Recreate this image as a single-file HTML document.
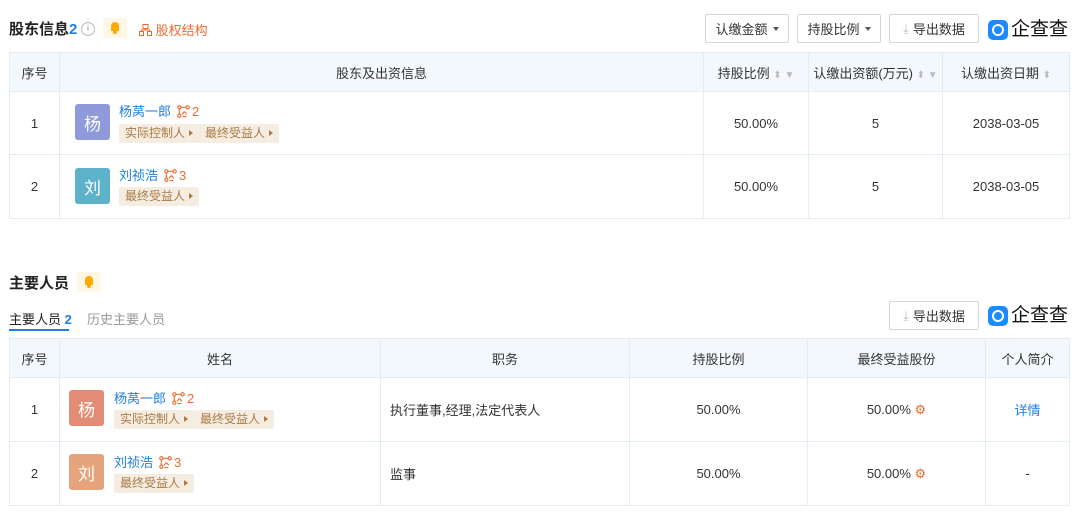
<!DOCTYPE html>
<html><head><meta charset="utf-8"><style>
*{box-sizing:border-box;margin:0;padding:0}
body{width:1080px;height:525px;background:#fff;font-family:"Liberation Sans","Noto Sans CJK SC",sans-serif;font-size:13px;color:#333;position:relative;overflow:hidden}
.abs{position:absolute}
.title{font-size:15px;font-weight:bold;color:#222;line-height:20px}
.btn{position:absolute;height:29px;border:1px solid #d6d6d6;border-radius:2px;font-size:13px;color:#333;display:flex;align-items:center;justify-content:center;background:#fff}
.caret{display:inline-block;border-left:3.5px solid transparent;border-right:3.5px solid transparent;border-top:4px solid #555;margin-left:5px}
table{position:absolute;border-collapse:collapse;left:9px;width:1060px;table-layout:fixed}
td,th{border:1px solid #e4ecf3;text-align:center;font-weight:normal;font-size:13px}
th{background:#f2f8fc;height:39px;color:#333}
.av{position:absolute;width:35px;height:36px;border-radius:3px;color:#fff;font-size:17px;display:flex;align-items:center;justify-content:center}
.nm{position:absolute;color:#1f7fe0;font-size:13px;white-space:nowrap;line-height:16px}
.nm b{color:#f06a2d;font-weight:normal;margin-left:6px}
.nm svg{vertical-align:-2px;margin-right:2px}
.tag{position:absolute;height:19px;background:#f6ede2;color:#a97a44;font-size:12px;padding:0 6px;line-height:19px;border-radius:2px;white-space:nowrap}
.tag:after{content:"";display:inline-block;border-top:3.5px solid transparent;border-bottom:3.5px solid transparent;border-left:4px solid #a97a44;margin-left:4px;vertical-align:1px}
.bell{position:absolute;width:24px;height:20px;background:#fff6e6;border-radius:2px}
.bell:before{content:"";position:absolute;left:8px;top:4px;width:8px;height:9px;background:#ffaa00;border-radius:4px 4px 1px 1px}
.bell:after{content:"";position:absolute;left:10px;top:13px;width:4px;height:3px;background:#ffaa00;border-radius:0 0 2px 2px}
.logo{position:absolute;display:flex;align-items:center;font-size:19px;color:#111;line-height:22px}
.logo i{display:inline-block;width:20px;height:20px;background:#1a8cff;border-radius:5px;margin-right:3px;position:relative}
.logo i:before{content:"";position:absolute;left:4px;top:4px;width:8px;height:8px;border:2px solid #fff;border-radius:50%}
.ic{color:#bbb;font-size:10px}
</style></head><body>
<div class="abs title" style="left:9px;top:20px">股东信息<span style="color:#1f7fe0">2</span></div>
<div class="abs" style="left:81px;top:22px;width:14px;height:14px;border:1px solid #bbb;border-radius:50%;font-size:10px;color:#aaa;text-align:center;line-height:12px">i</div>
<div class="bell" style="left:103px;top:18px"></div>
<div class="abs" style="left:139px;top:20px;color:#f06a2d;font-size:13px">
<svg width="13" height="12" style="vertical-align:-1px"><rect x="4" y="0.5" width="5" height="4" fill="none" stroke="#f06a2d"/><rect x="0.5" y="7.5" width="4" height="4" fill="none" stroke="#f06a2d"/><rect x="8.5" y="7.5" width="4" height="4" fill="none" stroke="#f06a2d"/><path d="M6.5 4.5V6M2.5 7.5V6H10.5V7.5" fill="none" stroke="#f06a2d"/></svg> 股权结构</div>
<div class="btn" style="left:705px;top:14px;width:84px">认缴金额<span class="caret"></span></div>
<div class="btn" style="left:797px;top:14px;width:84px">持股比例<span class="caret"></span></div>
<div class="btn" style="left:889px;top:14px;width:90px"><span style="color:#bbb;margin-right:4px">⤓</span>导出数据</div>
<div class="logo" style="left:988px;top:19px"><i></i>企查查</div>

<table style="top:52px">
<colgroup><col style="width:50px"><col style="width:644px"><col style="width:105px"><col style="width:134px"><col style="width:127px"></colgroup>
<tr><th>序号</th><th>股东及出资信息</th><th>持股比例 <span class="ic">⬍ ▼</span></th><th>认缴出资额(万元) <span class="ic">⬍ ▼</span></th><th>认缴出资日期 <span class="ic">⬍</span></th></tr>
<tr style="height:63px"><td>1</td><td></td><td>50.00%</td><td>5</td><td>2038-03-05</td></tr>
<tr style="height:64px"><td>2</td><td></td><td>50.00%</td><td>5</td><td>2038-03-05</td></tr>
</table>
<svg width="0" height="0" style="position:absolute"><defs><symbol id="ch" viewBox="0 0 14 14"><g fill="none" stroke="#f06a2d" stroke-width="1.2"><circle cx="2.5" cy="2.5" r="1.7"/><circle cx="11.5" cy="2.5" r="1.7"/><circle cx="2.5" cy="11.5" r="1.7"/><path d="M4.2 2.5H9.8M2.5 4.2V9.8M8 7l-2.5 3M8 7l2.5 3M6 12.5h4"/></g></symbol></defs></svg>
<div class="av" style="left:75px;top:104px;background:#8e9ad9">杨</div>
<div class="nm" style="left:119px;top:104px">杨莴一郎<b><svg width="13" height="13"><use href="#ch"/></svg>2</b></div>
<div class="tag" style="left:119px;top:124px">实际控制人</div>
<div class="tag" style="left:199px;top:124px">最终受益人</div>
<div class="av" style="left:75px;top:168px;background:#5db1c9">刘</div>
<div class="nm" style="left:119px;top:168px">刘祯浩<b><svg width="13" height="13"><use href="#ch"/></svg>3</b></div>
<div class="tag" style="left:119px;top:187px">最终受益人</div>

<div class="abs title" style="left:9px;top:274px">主要人员</div>
<div class="bell" style="left:77px;top:272px"></div>
<div class="abs" style="left:9px;top:309px;font-size:13px;color:#222">主要人员 <span style="color:#1f7fe0;font-weight:bold">2</span></div>
<div class="abs" style="left:9px;top:329px;width:60px;height:2px;background:#1f7fe0"></div>
<div class="abs" style="left:87px;top:309px;font-size:13px;color:#999">历史主要人员</div>
<div class="btn" style="left:889px;top:301px;width:90px"><span style="color:#bbb;margin-right:4px">⤓</span>导出数据</div>
<div class="logo" style="left:988px;top:305px"><i></i>企查查</div>

<table style="top:338px">
<colgroup><col style="width:50px"><col style="width:321px"><col style="width:249px"><col style="width:178px"><col style="width:178px"><col style="width:84px"></colgroup>
<tr><th>序号</th><th>姓名</th><th>职务</th><th>持股比例</th><th>最终受益股份</th><th>个人简介</th></tr>
<tr style="height:64px"><td>1</td><td></td><td style="text-align:left;padding-left:9px">执行董事,经理,法定代表人</td><td>50.00%</td><td>50.00% <span style="color:#f06a2d">⚙</span></td><td style="color:#1f7fe0">详情</td></tr>
<tr style="height:64px"><td>2</td><td></td><td style="text-align:left;padding-left:9px">监事</td><td>50.00%</td><td>50.00% <span style="color:#f06a2d">⚙</span></td><td>-</td></tr>
</table>
<div class="av" style="left:69px;top:390px;background:#e38c75">杨</div>
<div class="nm" style="left:114px;top:391px">杨莴一郎<b><svg width="13" height="13"><use href="#ch"/></svg>2</b></div>
<div class="tag" style="left:114px;top:410px">实际控制人</div>
<div class="tag" style="left:194px;top:410px">最终受益人</div>
<div class="av" style="left:69px;top:454px;background:#e6a47c">刘</div>
<div class="nm" style="left:114px;top:455px">刘祯浩<b><svg width="13" height="13"><use href="#ch"/></svg>3</b></div>
<div class="tag" style="left:114px;top:474px">最终受益人</div>
</body></html>
